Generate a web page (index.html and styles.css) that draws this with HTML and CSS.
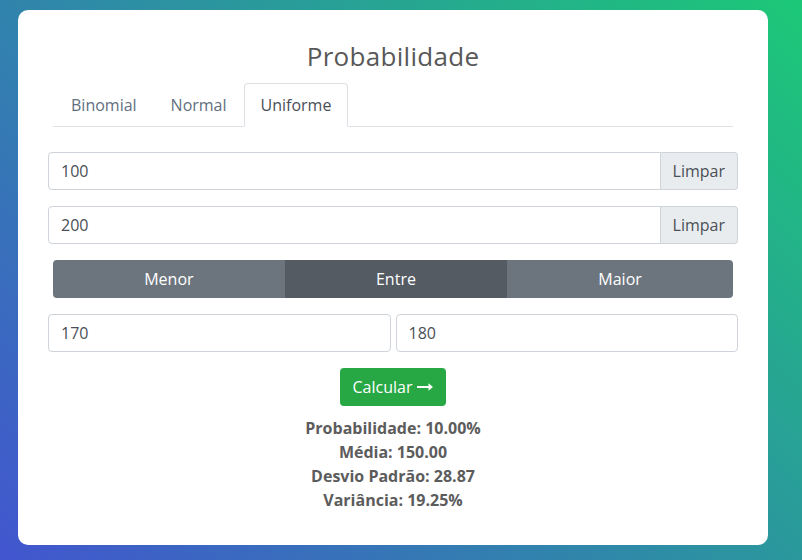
FILE: index.html
```html
<!DOCTYPE html>
<html lang="pt">
<head>
<meta charset="utf-8">
<title>Probabilidade</title>
<link rel="stylesheet" href="styles.css">
</head>
<body>
<div class="card">
  <h1 class="title">Probabilidade</h1>
  <ul class="tabs">
    <li class="tab">Binomial</li>
    <li class="tab">Normal</li>
    <li class="tab active">Uniforme</li>
  </ul>
  <div class="group first">
    <input class="field" type="text" value="100">
    <span class="addon">Limpar</span>
  </div>
  <div class="group">
    <input class="field" type="text" value="200">
    <span class="addon">Limpar</span>
  </div>
  <div class="btngroup">
    <button class="seg">Menor</button>
    <button class="seg on">Entre</button>
    <button class="seg">Maior</button>
  </div>
  <div class="pair">
    <input class="field box" type="text" value="170">
    <input class="field box" type="text" value="180">
  </div>
  <div class="actions">
    <button class="calc">Calcular <svg class="arrow" width="16" height="10" viewBox="0 0 16 10"><path d="M0 4h11.5V1.3L16 5l-4.5 3.7V6H0z" fill="#fff"/></svg></button>
  </div>
  <div class="results">
    <div>Probabilidade: 10.00%</div>
    <div>Média: 150.00</div>
    <div>Desvio Padrão: 28.87</div>
    <div>Variância: 19.25%</div>
  </div>
</div>
</body>
</html>
```
FILE: styles.css
```css
html, body {
  margin: 0;
  height: 100%;
}
body {
  background: linear-gradient(45deg, #4255cf 0%, #2f88a9 45%, #1cc877 100%);
  padding: 10px 0 0 18px;
  box-sizing: border-box;
  font-family: "Open Sans", "Liberation Sans", sans-serif;
  overflow: hidden;
}
.card {
  width: 750px;
  height: 535px;
  background: #fff;
  border-radius: 10px;
  padding: 31px 30px 0;
  box-sizing: border-box;
}
.title {
  margin: 0 0 12px;
  font-size: 26px;
  font-weight: 400;
  line-height: 30px;
  letter-spacing: 0.3px;
  color: #585858;
  text-align: center;
}
.tabs {
  list-style: none;
  margin: 0 5px;
  padding: 0 0 0 1px;
  display: flex;
  border-bottom: 1px solid #dee2e6;
}
.tab {
  padding: 9px 16px;
  line-height: 24px;
  font-size: 16px;
  color: #5f6f80;
  border: 1px solid transparent;
  border-top-left-radius: 4px;
  border-top-right-radius: 4px;
  margin-bottom: -1px;
}
.tab.active {
  color: #495057;
  background: #fff;
  border-color: #dee2e6 #dee2e6 #fff;
}
.group {
  display: flex;
  margin-top: 16px;
}
.group.first {
  margin-top: 25px;
}
.field {
  flex: 1;
  height: 38px;
  box-sizing: border-box;
  border: 1px solid #ced4da;
  border-radius: 4px 0 0 4px;
  padding: 6px 12px;
  font-family: inherit;
  font-size: 16px;
  color: #495057;
  min-width: 0;
}
.addon {
  height: 38px;
  box-sizing: border-box;
  padding: 6px 12px;
  line-height: 24px;
  font-size: 16px;
  color: #495057;
  background: #e9ecef;
  border: 1px solid #ced4da;
  border-left: 0;
  border-radius: 0 4px 4px 0;
}
.btngroup {
  display: flex;
  margin: 16px 5px 0;
}
.seg {
  flex: 1 1 auto;
  height: 38px;
  border: 0;
  background: #6c757d;
  color: #fff;
  font-family: inherit;
  font-size: 16px;
  padding: 6px 12px;
}
.seg:first-child { border-radius: 4px 0 0 4px; }
.seg:last-child { border-radius: 0 4px 4px 0; }
.seg.on { background: #545b62; }
.pair {
  display: grid;
  grid-template-columns: 1fr 1fr;
  gap: 5px;
  margin-top: 16px;
}
.field.box {
  border-radius: 4px;
}
.actions {
  display: flex;
  justify-content: center;
  margin-top: 16px;
}
.calc {
  height: 38px;
  background: #28a745;
  border: 0;
  border-radius: 4px;
  color: #fff;
  font-family: inherit;
  font-size: 16px;
  padding: 6px 13px;
  display: flex;
  align-items: center;
  gap: 5px;
}
.arrow { display: block; }
.results {
  margin-top: 10px;
  text-align: center;
  font-weight: 700;
  font-size: 16px;
  line-height: 24px;
  color: #5c5c5c;
}
```
